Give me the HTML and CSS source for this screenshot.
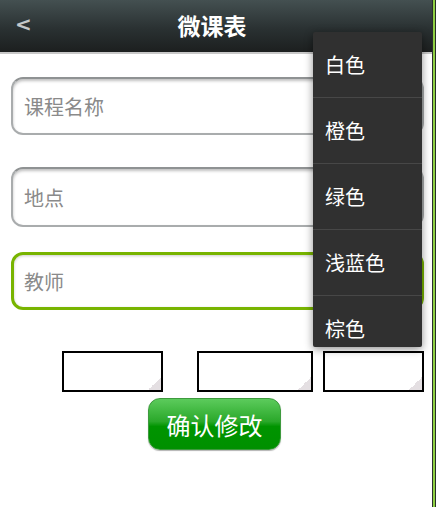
FILE: index.html
```html
<!DOCTYPE html>
<html lang="zh">

<head>
    <meta charset="UTF-8">
    <meta name="viewport" content="width=device-width, initial-scale=1.0">
    <title>微课表</title>
    <link rel="stylesheet" href="styles.css">
</head>

<body>
    <div class="screen">
        <div class="top-bar">
            <span class="back">&lt;</span>
            <span class="title">微课表</span>
        </div>

        <div class="form">
            <input class="field" type="text" placeholder="课程名称">
            <input class="field second" type="text" placeholder="地点">
            <input class="field focused" type="text" placeholder="教师">

            <div class="boxes">
                <div class="box box-a"></div>
                <div class="box box-b"></div>
                <div class="box box-c"></div>
            </div>

            <div class="btn-row">
                <button class="confirm">确认修改</button>
            </div>
        </div>

        <!-- color popup menu -->
        <ul class="menu">
            <li>白色</li>
            <li>橙色</li>
            <li>绿色</li>
            <li>浅蓝色</li>
            <li>棕色</li>
        </ul>
    </div>
    <div class="edge"></div>
</body>

</html>
```

FILE: styles.css
```css
html, body {
    margin: 0;
    padding: 0;
    background: #ffffff;
}

body {
    display: flex;
    width: 438px;
    height: 507px;
    overflow: hidden;
    font-family: "Noto Sans CJK SC", "DejaVu Sans", sans-serif;
}

.screen {
    position: relative;
    width: 432px;
    height: 507px;
    overflow: hidden;
}

.edge {
    width: 6px;
    height: 507px;
    box-sizing: border-box;
    border-left: 1px solid #2b2f2f;
    border-right: 2px solid #ffffff;
    background: linear-gradient(to right, #8fd043 0, #8fd043 2px, #263026 2px);
}

.top-bar {
    height: 52px;
    display: flex;
    align-items: center;
    justify-content: center;
    position: relative;
    background: linear-gradient(to bottom, #445051, #2a3132 55%, #1c1f1f);
    border-bottom: 2px solid #c8c8c8;
}

.back {
    position: absolute;
    left: 15px;
    top: 12px;
    color: #c4c8c8;
    font-size: 20px;
    font-weight: bold;
    font-family: "DejaVu Sans", sans-serif;
}

.title {
    color: #ffffff;
    font-size: 23px;
    font-weight: bold;
    margin-left: -8px;
    margin-top: -2px;
}

.form {
    display: flex;
    flex-direction: column;
    padding: 23px 8px 0 11px;
}

.field {
    width: 413px;
    height: 58px;
    box-sizing: border-box;
    margin: 0 0 32px 0;
    padding: 0 11px;
    border: 2px solid #a9acad;
    border-top-color: #8f9293;
    border-radius: 12px;
    box-shadow: inset 0 2px 3px rgba(0, 0, 0, 0.25);
    background: #ffffff;
    font-family: inherit;
    font-size: 20px;
    color: #333;
    outline: none;
}

.field::placeholder {
    color: #8a8a8a;
}

.field.second {
    height: 60px;
    margin-bottom: 25px;
}

.field.focused {
    border: 3px solid #78b400;
    box-shadow: inset 0 1px 3px rgba(0, 0, 0, 0.2);
    padding: 0 10px;
    margin-bottom: 0;
}

.boxes {
    display: flex;
    margin-top: 41px;
}

.box {
    position: relative;
    height: 41px;
    box-sizing: border-box;
    border: 2px solid #000000;
    background: #ffffff;
}

.box::after {
    content: "";
    position: absolute;
    right: 0;
    bottom: 0;
    width: 13px;
    height: 13px;
    background: linear-gradient(135deg, transparent 50%, #e4dfe2 50%);
}

.box-a {
    width: 102px;
    margin-left: 51px;
}

.box-b {
    width: 116px;
    margin-left: 34px;
}

.box-c {
    width: 102px;
    margin-left: 10px;
}

.btn-row {
    display: flex;
    padding-left: 137px;
    margin-top: 6px;
}

.confirm {
    width: 133px;
    height: 52px;
    border: 1px solid #3e9a3e;
    border-radius: 12px;
    background: linear-gradient(to bottom, #5ccb5c, #2aa82a 45%, #009400 55%, #009000);
    color: #ffffff;
    font-family: inherit;
    font-size: 24px;
    box-shadow: 0 1px 1px rgba(0, 0, 0, 0.3);
}

.menu {
    position: absolute;
    left: 313px;
    top: 32px;
    width: 109px;
    height: 315px;
    margin: 0;
    padding: 0;
    list-style: none;
    overflow: hidden;
    background: #303030;
    border-radius: 2px;
    box-shadow: 0 2px 8px rgba(0, 0, 0, 0.45);
}

.menu li {
    height: 66px;
    box-sizing: border-box;
    padding-left: 12px;
    display: flex;
    align-items: center;
    color: #ffffff;
    font-size: 20px;
    border-bottom: 1px solid #474747;
}
```
